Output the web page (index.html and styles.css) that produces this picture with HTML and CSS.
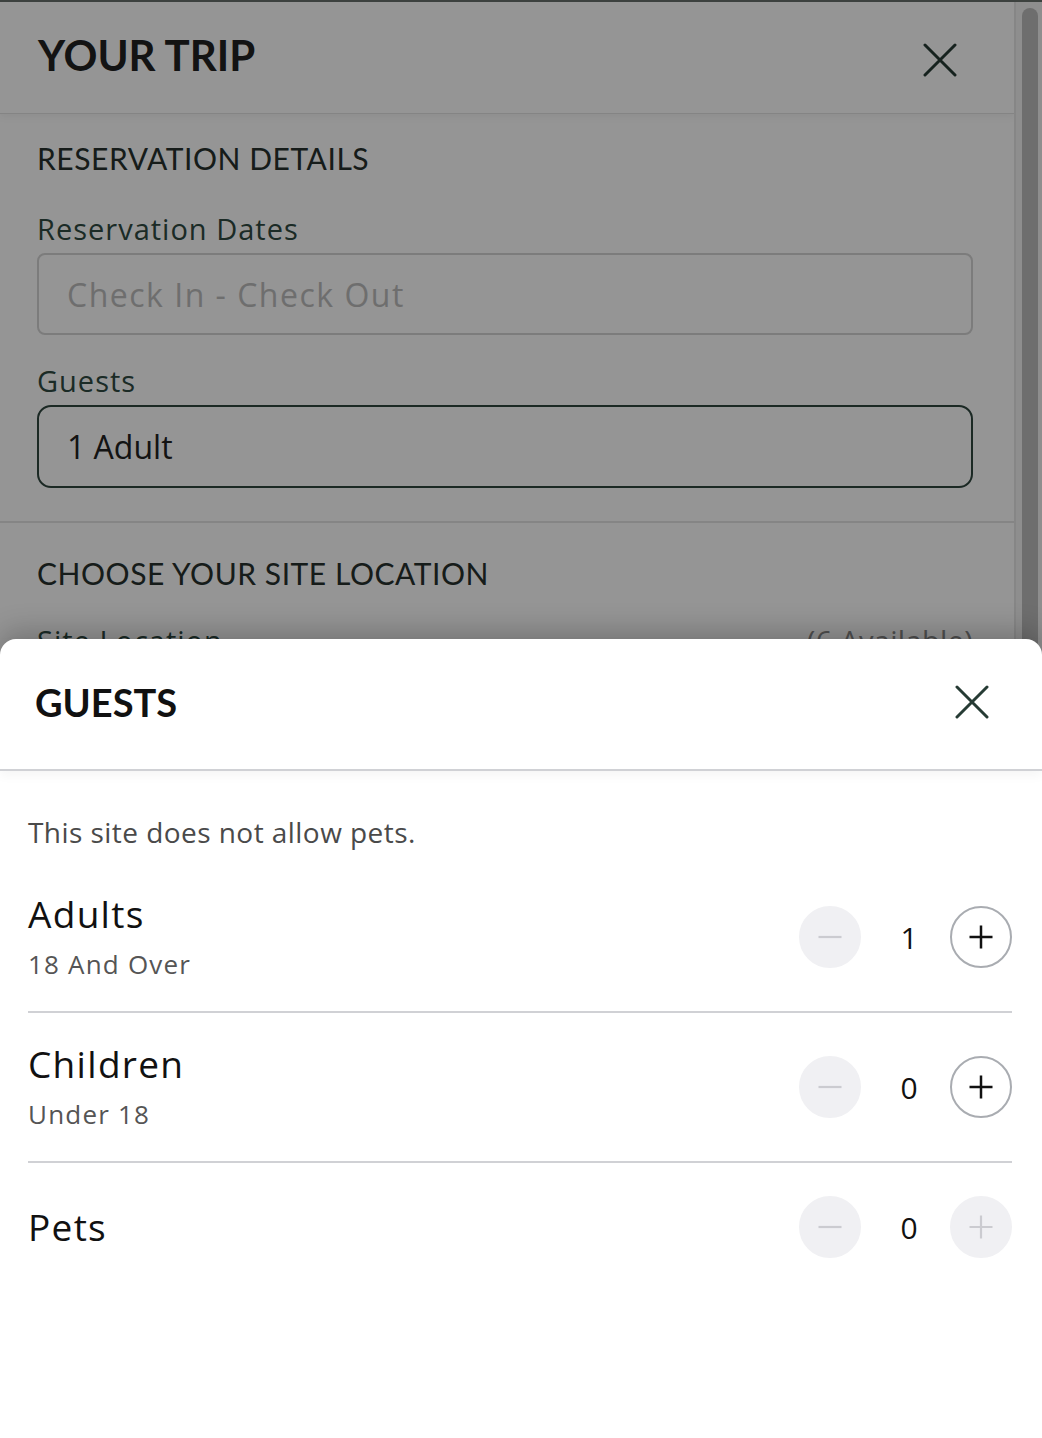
FILE: index.html
```html
<!DOCTYPE html>
<html lang="en">
<head>
    <meta charset="UTF-8">
    <meta name="viewport" content="width=device-width, initial-scale=1.0">
    <title>Your Trip - Guests</title>
    <link rel="stylesheet" href="styles.css">
</head>
<body>
    <div class="screen">
        <div class="page">
            <div class="trip">
                <header class="trip-header">
                    <h1 class="trip-title">YOUR TRIP</h1>
                    <button class="close-btn trip-close" aria-label="Close">
                        <svg width="34" height="34" viewBox="0 0 34 34"><path d="M2 2 L32 32 M32 2 L2 32" /></svg>
                    </button>
                </header>
                <section class="section section-first">
                    <h2 class="section-title">RESERVATION DETAILS</h2>
                    <div class="field-label label-first">Reservation Dates</div>
                    <div class="input input-dates">Check In - Check Out</div>
                    <div class="field-label">Guests</div>
                    <div class="input input-guests">1 Adult</div>
                </section>
                <section class="section">
                    <h2 class="section-title">CHOOSE YOUR SITE LOCATION</h2>
                    <div class="field-row">
                        <span class="field-label">Site Location</span>
                        <span class="available">(6 Available)</span>
                    </div>
                </section>
            </div>
            <div class="scrollbar"><div class="thumb"></div></div>
        </div>

        <div class="backdrop"></div>

        <div class="sheet">
            <div class="sheet-header">
                <h2 class="sheet-title">GUESTS</h2>
                <button class="close-btn" aria-label="Close guests">
                    <svg width="34" height="34" viewBox="0 0 34 34"><path d="M2 2 L32 32 M32 2 L2 32" /></svg>
                </button>
            </div>
            <div class="sheet-body">
                <p class="note">This site does not allow pets.</p>

                <div class="guest-row">
                    <div class="guest-info">
                        <div class="guest-name">Adults</div>
                        <div class="guest-sub">18 And Over</div>
                    </div>
                    <div class="stepper">
                        <button class="step-btn" disabled aria-label="Remove adult">
                            <svg width="24" height="24" viewBox="0 0 24 24"><path d="M0.5 12 H23.5" /></svg>
                        </button>
                        <span class="count">1</span>
                        <button class="step-btn active" aria-label="Add adult">
                            <svg width="24" height="24" viewBox="0 0 24 24"><path d="M0.5 12 H23.5 M12 0.5 V23.5" /></svg>
                        </button>
                    </div>
                </div>

                <div class="guest-row">
                    <div class="guest-info">
                        <div class="guest-name">Children</div>
                        <div class="guest-sub">Under 18</div>
                    </div>
                    <div class="stepper">
                        <button class="step-btn" disabled aria-label="Remove child">
                            <svg width="24" height="24" viewBox="0 0 24 24"><path d="M0.5 12 H23.5" /></svg>
                        </button>
                        <span class="count">0</span>
                        <button class="step-btn active" aria-label="Add child">
                            <svg width="24" height="24" viewBox="0 0 24 24"><path d="M0.5 12 H23.5 M12 0.5 V23.5" /></svg>
                        </button>
                    </div>
                </div>

                <div class="guest-row guest-row-last">
                    <div class="guest-info">
                        <div class="guest-name">Pets</div>
                    </div>
                    <div class="stepper">
                        <button class="step-btn" disabled aria-label="Remove pet">
                            <svg width="24" height="24" viewBox="0 0 24 24"><path d="M0.5 12 H23.5" /></svg>
                        </button>
                        <span class="count">0</span>
                        <button class="step-btn" disabled aria-label="Add pet">
                            <svg width="24" height="24" viewBox="0 0 24 24"><path d="M0.5 12 H23.5 M12 0.5 V23.5" /></svg>
                        </button>
                    </div>
                </div>
            </div>
        </div>
    </div>
</body>
</html>
```

FILE: styles.css
```css
body, html {
    margin: 0;
    padding: 0;
    height: 100%;
    font-family: "Open Sans", Arial, sans-serif;
    overflow: hidden;
}
.screen {
    position: relative;
    height: 100%;
    overflow: hidden;
    background: #fff;
}
.page {
    display: flex;
    height: 100%;
    border-top: 2px solid #69716d;
    box-sizing: border-box;
}
.trip {
    flex: 1;
}
.trip-header {
    display: flex;
    justify-content: space-between;
    align-items: flex-start;
    height: 112px;
    box-sizing: border-box;
    padding: 28px 57px 0 38px;
    border-bottom: 1px solid #e2e2e2;
    box-shadow: 0 3px 8px rgba(0, 0, 0, 0.05);
}
.trip-title {
    margin: 0;
    font-family: Lato, sans-serif;
    font-size: 42px;
    line-height: 50px;
    font-weight: 700;
    letter-spacing: 0;
    color: #222;
}
.close-btn {
    background: none;
    border: none;
    padding: 0;
    width: 34px;
    height: 34px;
    cursor: pointer;
}
.close-btn svg {
    display: block;
    fill: none;
    stroke: #263b34;
    stroke-width: 3;
    stroke-linecap: round;
}
.trip-close {
    margin-top: 13px;
}
.section {
    padding: 32px 41px 33px 37px;
    border-bottom: 2px solid #e4e4e4;
}
.section-first {
    padding-top: 26px;
}
.section-title {
    margin: 0;
    font-family: Lato, sans-serif;
    font-size: 30px;
    line-height: 36px;
    font-weight: 400;
    letter-spacing: 0.55px;
    color: #27302d;
}
.field-label {
    font-size: 29px;
    line-height: 36px;
    letter-spacing: 1px;
    color: #2f4a42;
    margin: 28px 0 6px;
}
.label-first {
    margin-top: 35px;
}
.input {
    height: 82px;
    box-sizing: border-box;
    display: flex;
    align-items: center;
    padding: 0 28px;
    font-size: 32px;
    letter-spacing: 1.5px;
}
.input-dates {
    border: 2px solid #d4d4d4;
    border-radius: 8px;
    color: #bdbdbd;
}
.input-guests {
    height: 83px;
    border: 2px solid #2f463f;
    border-radius: 14px;
    color: #222;
    letter-spacing: 0;
}
.field-row {
    display: flex;
    justify-content: space-between;
    align-items: baseline;
    margin-top: 30px;
}
.field-row .field-label {
    margin: 0;
}
.available {
    font-size: 29px;
    letter-spacing: 0.3px;
    color: #8a8a8a;
}
.scrollbar {
    width: 28px;
    border-left: 2px solid #e6e6e6;
    background: #f3f3f3;
    box-sizing: border-box;
    padding: 6px 4px 0 6px;
}
.thumb {
    height: 760px;
    border-radius: 8px;
    background: #bdbdbd;
}
.backdrop {
    position: absolute;
    inset: 0;
    background: rgba(0, 0, 0, 0.416);
}
.sheet {
    position: absolute;
    left: 0;
    right: 0;
    bottom: 0;
    height: 799px;
    background: #fff;
    border-radius: 16px 16px 0 0;
    box-shadow: 0 -8px 28px rgba(0, 0, 0, 0.22);
}
.sheet-header {
    display: flex;
    justify-content: space-between;
    align-items: center;
    height: 132px;
    box-sizing: border-box;
    padding: 0 53px 4px 35px;
    border-bottom: 2px solid #d0d1d5;
    box-shadow: 0 5px 10px rgba(0, 0, 0, 0.04);
}
.sheet-title {
    margin: 0;
    font-family: Lato, sans-serif;
    font-size: 38px;
    line-height: 46px;
    font-weight: 700;
    letter-spacing: 0;
    color: #111;
}
.sheet-body {
    padding: 43px 30px 0 28px;
}
.note {
    margin: 0 0 13px;
    font-size: 28px;
    line-height: 36px;
    color: #4a4a4a;
    letter-spacing: 0.45px;
}
.guest-row {
    display: flex;
    justify-content: space-between;
    align-items: center;
    padding: 31px 0;
    border-bottom: 2px solid #d0d1d5;
}
.guest-row-last {
    border-bottom: none;
    padding-top: 33px;
}
.guest-name {
    font-size: 37px;
    line-height: 40px;
    letter-spacing: 1.3px;
    color: #111;
}
.guest-sub {
    margin-top: 14px;
    font-size: 26px;
    line-height: 32px;
    letter-spacing: 1.2px;
    color: #555;
}
.stepper {
    display: flex;
    align-items: center;
}
.step-btn {
    width: 62px;
    height: 62px;
    border-radius: 50%;
    border: 2px solid #f0f0f3;
    background: #f0f0f3;
    display: flex;
    justify-content: center;
    align-items: center;
    padding: 0;
}
.step-btn svg {
    fill: none;
    stroke: #cbcbd0;
    stroke-width: 2.2;
}
.step-btn.active {
    background: #fff;
    border-color: #a9acb1;
    cursor: pointer;
}
.step-btn.active svg {
    stroke: #111;
    stroke-width: 2.5;
}
.count {
    width: 60px;
    margin: 0 11px 0 18px;
    text-align: center;
    font-size: 30px;
    color: #111;
}
```
